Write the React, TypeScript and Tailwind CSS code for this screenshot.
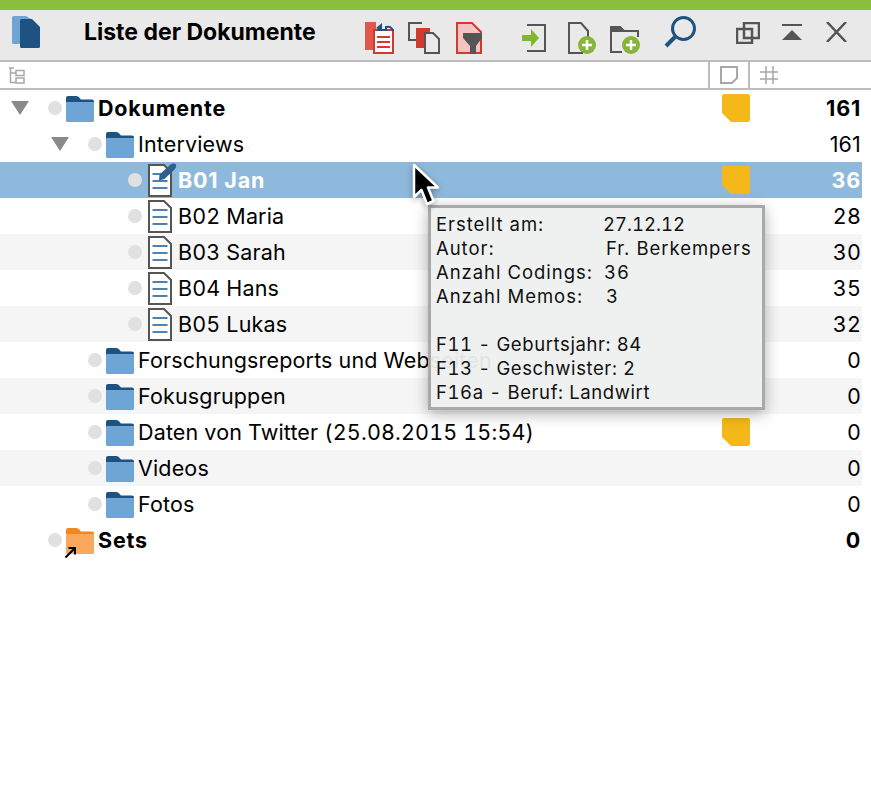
const FONT = "font-['Inter','Liberation_Sans',sans-serif]";

const FolderIcon = ({ orange = false }: { orange?: boolean }) => (
  <svg width="28" height="26" viewBox="0 0 28 26" className="mt-[2px] block shrink-0">
    <path d="M0 7V2a2 2 0 0 1 2-2h8c2 0 3 1 4 2.500l1 1h11a2 2 0 0 1 2 2V7z" fill={orange ? '#ee8a1d' : '#1d5282'} />
    <path d="M0 6h28v18.500a1.500 1.500 0 0 1-1.500 1.500h-25A1.500 1.500 0 0 1 0 24.500z" fill={orange ? '#fba85f' : '#6fa5d4'} />
  </svg>
);

const DocIcon = ({ pen = false }: { pen?: boolean }) => (
  <svg width="24" height="33" viewBox="0 0 24 33" className="block shrink-0 overflow-visible">
    <path d="M1 1h15l7 7v24H1z" fill="#fff" stroke="#555" strokeWidth="2" />
    <path d="M4.500 10h15M4.500 17h15M4.500 24h15" stroke="#4a83b4" strokeWidth="2" />
    {pen && <path d="M11.500 10.500 L22.500 0.500 Q26 -1.500 28 0.500 Q29 3 26.500 5.500 L16.500 15 L11 16.500z" fill="#2f5f8f" />}
  </svg>
);

const Note = () => (
  <svg width="28" height="28" viewBox="0 0 28 28">
    <path d="M2 0h24a2 2 0 0 1 2 2v24a2 2 0 0 1-2 2H9l-9-9V2a2 2 0 0 1 2-2z" fill="#f5b81a" />
  </svg>
);

type RowData = {
  label: string;
  count: number;
  level: 0 | 1 | 2;
  icon: 'folder' | 'set' | 'doc';
  open?: boolean;
  note?: boolean;
  bold?: boolean;
  selected?: boolean;
  stripe?: boolean;
};

const rows: RowData[] = [
  { label: 'Dokumente', count: 161, level: 0, icon: 'folder', open: true, note: true, bold: true },
  { label: 'Interviews', count: 161, level: 1, icon: 'folder', open: true },
  { label: 'B01 Jan', count: 36, level: 2, icon: 'doc', note: true, bold: true, selected: true },
  { label: 'B02 Maria', count: 28, level: 2, icon: 'doc' },
  { label: 'B03 Sarah', count: 30, level: 2, icon: 'doc', stripe: true },
  { label: 'B04 Hans', count: 35, level: 2, icon: 'doc' },
  { label: 'B05 Lukas', count: 32, level: 2, icon: 'doc', stripe: true },
  { label: 'Forschungsreports und Webseiten', count: 0, level: 1, icon: 'folder' },
  { label: 'Fokusgruppen', count: 0, level: 1, icon: 'folder', stripe: true },
  { label: 'Daten von Twitter (25.08.2015 15:54)', count: 0, level: 1, icon: 'folder', note: true },
  { label: 'Videos', count: 0, level: 1, icon: 'folder', stripe: true },
  { label: 'Fotos', count: 0, level: 1, icon: 'folder' },
  { label: 'Sets', count: 0, level: 0, icon: 'set', bold: true },
];

const Triangle = () => (
  <svg width="18" height="14" viewBox="0 0 18 14" className="block">
    <path d="M0 0h18L9 14z" fill="#8a8a8a" />
  </svg>
);

const Row = ({ row }: { row: RowData }) => {
  const isDoc = row.icon === 'doc';
  return (
    <div
      className={`flex h-9 w-[862px] items-center text-[21.5px] ${row.selected ? 'bg-[#8fb9dc] text-white' : row.stripe ? 'bg-[#f5f5f5] text-black' : 'text-black'} ${row.bold ? 'font-bold tracking-[0.8px]' : 'tracking-[0.15px] tabular-nums'}`}
    >
      <div className="flex min-w-0 flex-1 items-center">
        {row.level === 0 && <div className="w-[48px] shrink-0 pl-[11px]">{row.open && <Triangle />}</div>}
        {row.level === 1 && <div className="w-[88px] shrink-0 pl-[51px]">{row.open && <Triangle />}</div>}
        {row.level === 2 && <div className="w-[128px] shrink-0" />}
        <div className="size-[14px] shrink-0 rounded-full bg-[#e0e0e0]" />
        {isDoc ? (
          <div className="ml-[6px] mr-[6px] pt-px">
            <DocIcon pen={row.selected} />
          </div>
        ) : (
          <div className="relative ml-1 mr-1">
            <FolderIcon orange={row.icon === 'set'} />
            {row.icon === 'set' && (
              <svg width="14" height="14" viewBox="0 0 14 14" className="absolute -bottom-[5px] -left-[2px]">
                <path d="M1.500 12.500L10 4M4.500 3h6.500v6.500" fill="none" stroke="#000" strokeWidth="2" />
              </svg>
            )}
          </div>
        )}
        <span className="whitespace-nowrap">{row.label}</span>
      </div>
      <div className="size-7 shrink-0">{row.note && <Note />}</div>
      <div className={`w-[112px] shrink-0 pr-px text-right ${row.count === 161 ? '[font-variant-numeric:normal]' : ''}`}>{row.count}</div>
    </div>
  );
};

const Toolbar = () => (
  <div className="flex h-[50px] items-center bg-[#e9e9e9]">
    {/* logo */}
    <svg width="28" height="32" viewBox="0 0 28 32" className="mb-[6px] ml-3 shrink-0">
      <path d="M1.500 0H14l5 3v25H1.500A1.500 1.500 0 0 1 0 26.500v-25A1.500 1.500 0 0 1 1.500 0z" fill="#6fa5d4" />
      <path d="M9.500 3H20l8 8v19.500a1.500 1.500 0 0 1-1.500 1.500h-17A1.500 1.500 0 0 1 8 30.500v-26A1.500 1.500 0 0 1 9.500 3z" fill="#1d5282" />
    </svg>
    <span className="mb-[6px] ml-[44px] w-[281px] shrink-0 text-[23px] font-bold text-black">Liste der Dokumente</span>

    <svg width="30" height="32" viewBox="0 0 30 32" className="mt-[6px] shrink-0">
      <path d="M0 0h11v28H0z" fill="#e2574c" />
      <path d="M9 8h19v23H9z" fill="#fff" stroke="#d13b2d" strokeWidth="2" />
      <path d="M12 15h13M12 20h13M12 25h13" stroke="#d13b2d" strokeWidth="2" />
      <path d="M12 8h9V5c3-1 6 0 7 4" fill="none" stroke="#1d5282" strokeWidth="2" />
      <path d="M17 1l-6 5 6 3z" fill="#1d5282" />
    </svg>
    <svg width="32" height="32" viewBox="0 0 32 32" className="ml-[13px] mt-[6px] shrink-0">
      <path d="M14 1H1v17h7" fill="none" stroke="#555" strokeWidth="2" />
      <path d="M8 6h14v20H8z" fill="#d13b2d" />
      <path d="M17 11h8l6 6v14H17z" fill="#e9e9e9" stroke="#555" strokeWidth="2" />
    </svg>
    <svg width="26" height="32" viewBox="0 0 26 32" className="ml-4 mt-[6px] shrink-0">
      <path d="M1 1h15l9 9v21H1z" fill="#f6c4c0" stroke="#d13b2d" strokeWidth="2" />
      <path d="M7 11h19v5l-6 8v8h-6v-8l-7-8z" fill="#555" />
    </svg>
    <svg width="24" height="28" viewBox="0 0 24 28" className="ml-[40px] mt-[6px] shrink-0">
      <path d="M5 1h18v26H5" fill="none" stroke="#555" strokeWidth="2" />
      <path d="M0 11h9V5l8 9-8 9v-6H0z" fill="#7fb82e" />
    </svg>
    <svg width="28" height="32" viewBox="0 0 28 32" className="ml-[22px] mt-[6px] shrink-0">
      <path d="M15 31H1V1h12l7 8v6" fill="none" stroke="#555" strokeWidth="2" />
      <circle cx="19" cy="23" r="9" fill="#85b53a" />
      <path d="M19 18v10M14 23h10" stroke="#fff" strokeWidth="2.500" />
    </svg>
    <svg width="30" height="28" viewBox="0 0 30 28" className="ml-[14px] mt-[10px] shrink-0">
      <path d="M12 26H1V1h9l4 4h14v6" fill="none" stroke="#555" strokeWidth="2" />
      <path d="M0 0h10l4 4v2H0z" fill="#555" />
      <circle cx="21" cy="19" r="9" fill="#85b53a" />
      <path d="M21 14v10M16 19h10" stroke="#fff" strokeWidth="2.500" />
    </svg>
    <svg width="32" height="32" viewBox="0 0 32 32" className="mb-[6px] ml-6 shrink-0">
      <circle cx="19.500" cy="12.500" r="11" fill="none" stroke="#1d5282" strokeWidth="3" />
      <path d="M11 21L2 30" stroke="#1d5282" strokeWidth="4" />
    </svg>
    <svg width="24" height="22" viewBox="0 0 24 22" className="mb-1 ml-10 shrink-0">
      <path d="M8 1h15v15H8zM1 7h15v14H1z" fill="none" stroke="#555" strokeWidth="2.500" />
    </svg>
    <svg width="22" height="16" viewBox="0 0 22 16" className="mb-[6px] ml-[21px] shrink-0">
      <path d="M1 1h20" stroke="#555" strokeWidth="2" />
      <path d="M11 6l10 10H1z" fill="#555" />
    </svg>
    <svg width="21" height="20" viewBox="0 0 21 20" className="mb-[6px] ml-[23px] shrink-0">
      <path d="M1 0l19 20M20 0L1 20" stroke="#555" strokeWidth="2.500" />
    </svg>
  </div>
);

const HeaderRow = () => (
  <div className="flex h-[30px] items-stretch border-y-2 border-[#bcbcbc] bg-white">
    <div className="flex w-[708px] items-center pl-[9px]">
      <svg width="16" height="17" viewBox="0 0 16 17">
        <path d="M0 1h5M1.500 1v14.500H7M1.500 6H7M7 3.500h8v5H7zM7 11h8v5H7z" fill="none" stroke="#a8a8a8" strokeWidth="1.500" />
      </svg>
    </div>
    <div className="flex w-[42px] items-center border-x-2 border-[#bcbcbc] pl-[10px]">
      <svg width="18" height="18" viewBox="0 0 18 18">
        <path d="M1 1h16v11l-5 5H1z" fill="none" stroke="#a8a8a8" strokeWidth="2" />
      </svg>
    </div>
    <div className="flex items-center pl-[10px]">
      <svg width="18" height="18" viewBox="0 0 18 18">
        <path d="M6 0v18M13 0v18M0 6h18M0 13h18" stroke="#a8a8a8" strokeWidth="1.500" />
      </svg>
    </div>
  </div>
);

const tipLines: [string, string, string, string][] = [
  ['Erstellt am:', '27.12.12', 'w-[167px]', 'tracking-normal tabular-nums'],
  ['Autor:', 'Fr. Berkempers', 'w-[170px]', ''],
  ['Anzahl Codings:', '36', 'w-[168px]', 'tabular-nums'],
  ['Anzahl Memos:', '3', 'w-[170px]', 'tabular-nums'],
];

const Tooltip = () => (
  <div className="absolute left-[428px] top-[205px] h-[205px] w-[337px] border-[3px] border-[#a9a9a9] bg-[#eeefef]/95 pl-[5px] pt-[4px] text-[18.500px] leading-[24px] tracking-[0.95px] text-[#111] shadow-[0_4px_14px_rgba(0,0,0,0.3)]">
    {tipLines.map(([label, value, w, valueClass]) => (
      <div key={label} className="flex h-6 whitespace-nowrap">
        <span className={w}>{label}</span>
        <span className={valueClass}>{value}</span>
      </div>
    ))}
    <div className="h-6" />
    <div className="tracking-[0.6px] tabular-nums">F11 - Geburtsjahr: 84</div>
    <div className="tracking-[0.6px] tabular-nums">F13 - Geschwister: 2</div>
    <div className="tracking-[0.6px] tabular-nums">F16a - Beruf: Landwirt</div>
  </div>
);

const Cursor = () => (
  <svg width="30" height="46" viewBox="0 0 30 46" className="absolute left-[411px] top-[163px] drop-shadow-[0_2px_3px_rgba(0,0,0,0.35)]">
    <path d="M3 2v32l7.500-7 5.500 14 6.500-3-5.500-13.500h10z" fill="#000" stroke="#fff" strokeWidth="2.500" strokeLinejoin="round" />
  </svg>
);

export default function App() {
  return (
    <div className={`relative h-[809px] w-[871px] overflow-hidden bg-white ${FONT}`}>
      <div className="h-[10px] bg-[#8abf3c]" />
      <Toolbar />
      <HeaderRow />
      <div>
        {rows.map((row) => (
          <Row key={row.label} row={row} />
        ))}
      </div>
      <Tooltip />
      <Cursor />
    </div>
  );
}
